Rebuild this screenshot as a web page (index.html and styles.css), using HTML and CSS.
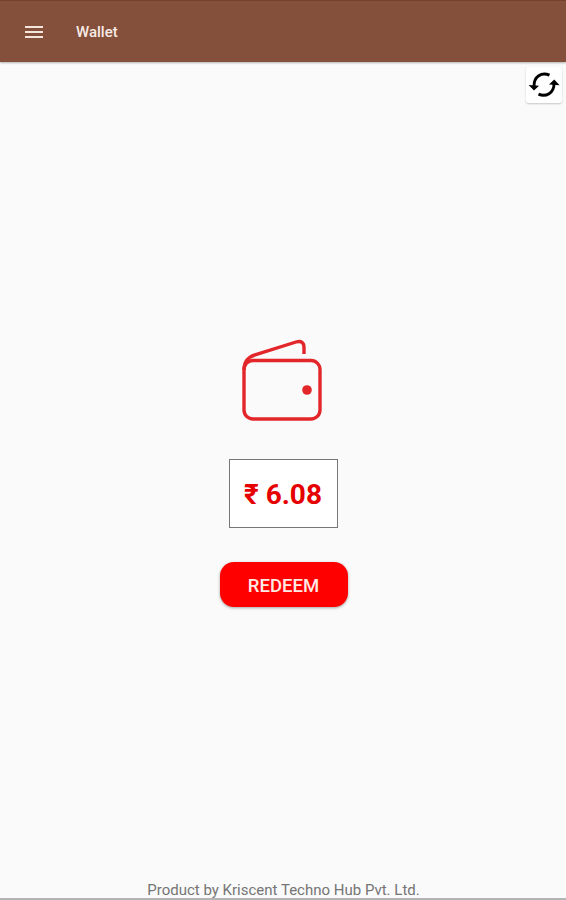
FILE: index.html
```html
<!DOCTYPE html>
<html lang="en">
<head>
    <meta charset="UTF-8">
    <meta name="viewport" content="width=device-width, initial-scale=1.0">
    <title>Wallet</title>
    <link rel="stylesheet" href="styles.css">
</head>
<body>
    <header class="app-bar">
        <button class="menu-btn" aria-label="Menu">
            <svg width="18" height="12" viewBox="0 0 18 12">
                <path d="M0 1h18M0 6h18M0 11h18" stroke="#f5e6dc" stroke-width="2"/>
            </svg>
        </button>
        <h1>Wallet</h1>
    </header>

    <div class="toolbar">
        <button class="refresh-btn" aria-label="Refresh">
            <svg width="32" height="28" viewBox="0 0 32 28">
                <g fill="none" stroke="#000" stroke-width="2.9">
                    <path d="M21.5 4.2C13.5 0.8 6 5.5 6 15"/>
                    <path d="M10.5 23.2C18 26.4 26 22 26 13"/>
                </g>
                <path d="M0.6 14L11 14.8L6 19.4Z"/>
                <path d="M21 13.6L26.2 8.6L31.6 14.2Z"/>
            </svg>
        </button>
    </div>

    <main class="wallet">
        <svg class="wallet-icon" width="80" height="82" viewBox="0 0 80 82">
            <g fill="none" stroke="#e3262a" stroke-width="3.4">
                <rect x="2" y="21.5" width="76" height="58.5" rx="9"/>
                <path d="M2 31C2 22 6 18 13 15.8L54 3C59.5 1.4 62 3.5 62 8.5V15"/>
            </g>
            <circle cx="65" cy="51" r="4.8" fill="#e3262a"/>
        </svg>
        <div class="balance">₹ 6.08</div>
        <button class="redeem-btn">REDEEM</button>
    </main>

    <footer class="footer">Product by Kriscent Techno Hub Pvt. Ltd.</footer>
</body>
</html>
```

FILE: styles.css
```css
* {
    box-sizing: border-box;
}

body {
    display: flex;
    flex-direction: column;
    height: 100vh;
    margin: 0;
    background: #fafafa;
    font-family: Roboto, "Liberation Sans", sans-serif;
}

button {
    padding: 0;
    border: none;
    font-family: inherit;
    cursor: pointer;
}

.app-bar {
    display: flex;
    flex: none;
    align-items: center;
    gap: 33px;
    height: 62px;
    padding: 0 25px;
    border-top: 1px solid #75412f;
    background: #84503c;
    box-shadow: 0 1px 2px rgba(0,0,0,0.3);
}

.menu-btn {
    display: flex;
    background: none;
}

h1 {
    margin: 0;
    color: #f8ebe4;
    font-size: 15px;
    font-weight: 500;
    line-height: 20px;
}

.toolbar {
    display: flex;
    justify-content: flex-end;
    padding: 5px 4px 0;
}

.refresh-btn {
    display: flex;
    align-items: center;
    justify-content: center;
    width: 36px;
    height: 36px;
    padding-bottom: 1px;
    border-radius: 3px;
    background: #fff;
    box-shadow: 0 1px 2px rgba(0,0,0,0.2);
}

.wallet {
    display: flex;
    flex: 1;
    flex-direction: column;
    align-items: center;
    padding-top: 236px;
}

.wallet-icon {
    margin-right: 3px;
}

.balance {
    width: 109px;
    height: 69px;
    margin-top: 38px;
    border: 1px solid #777;
    background: #fff;
    color: #e60000;
    font-size: 28px;
    font-weight: 700;
    line-height: 69px;
    text-align: center;
}

.redeem-btn {
    width: 128px;
    height: 45px;
    margin: 34px 0 0 1px;
    padding-top: 2px;
    border-radius: 14px;
    background: #f00;
    box-shadow: 0 1px 3px rgba(0,0,0,0.35);
    color: #ffe9e4;
    font-size: 18.5px;
    font-weight: 500;
}

.footer {
    height: 20px;
    padding-left: 1px;
    border-bottom: 2px solid #b4b4b4;
    color: #757575;
    font-size: 15px;
    line-height: 20px;
    text-align: center;
}
```
